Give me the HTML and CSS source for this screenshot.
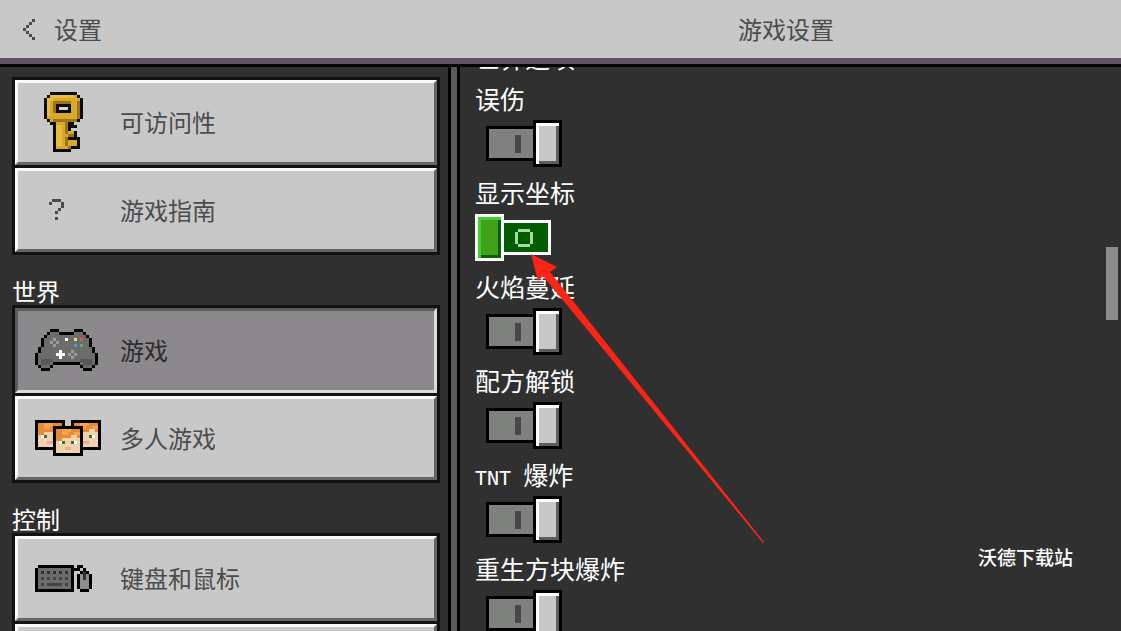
FILE: index.html
```html
<!DOCTYPE html>
<html lang="zh-CN">
<head>
<meta charset="utf-8">
<meta name="viewport" content="width=device-width, initial-scale=1">
<title>设置</title>
<link rel="stylesheet" href="styles.css">
</head>
<body>
<header class="topbar">
  <button class="back" type="button">
    <svg class="chevron" viewBox="0 0 4 7" aria-hidden="true"><path d="M3 0h1v1h-1zM2 1h1v1h-1zM1 2h1v1h-1zM0 3h1v1h-1zM1 4h1v1h-1zM2 5h1v1h-1zM3 6h1v1h-1z"/></svg>
    <span>设置</span>
  </button>
  <h1 class="title">游戏设置</h1>
</header>
<main class="panes">
  <nav class="sidebar">
    <div class="group">
      <button class="item" type="button">
        <span class="icon"><svg class="key" viewBox="0 0 13 20" aria-hidden="true">
          <path fill="#0c0a05" d="M2 0h9v1h1v1h1v7h-1v1h-2v1h1v1h-2v1h2v2h1v4h-3v1h-6v-9h-1v-1h-1v-1h-1v-7h1v-1h1z"/>
          <path fill="#d8a92b" d="M2 1h9v1h1v7h-1v1h-9v-1h-1v-7h1zM4 10h4v9h-4zM8 13h2v1h-2zM8 16h3v2h-3z"/>
          <path fill="#ecbc40" d="M2 1h8v1h-7v1h-1v5h-1v-6h1zM4 11h2v7h-2z"/>
          <path fill="#9c751b" d="M11 3h1v6h-1v1h-8v-1h8zM3 3h6v1h-5v3h-1zM7 10h1v4h-1zM7 15h1v3h-1zM8 14h2v1h-2zM8 18h1v1h-1z"/>
          <path fill="#0c0a05" d="M4 4h5v3h-5z"/>
          <path fill="#d5d5d5" d="M5 5h3v1h-3z"/>
        </svg></span>
        <span>可访问性</span>
      </button>
      <button class="item" type="button">
        <span class="icon"><svg class="question" viewBox="0 0 5 7" aria-hidden="true"><path d="M1 0h3v1h-3zM0 1h1v1h-1zM4 1h1v2h-1zM3 3h1v1h-1zM2 4h1v1h-1zM2 6h1v1h-1z"/></svg></span>
        <span>游戏指南</span>
      </button>
    </div>
    <h2 class="heading">世界</h2>
    <div class="group">
      <button class="item selected" type="button" aria-current="page">
        <span class="icon"><svg class="pad" viewBox="0 0 21 14" aria-hidden="true">
          <path fill="#000" d="M5 0h3v1h5v-1h3v1h1v1h1v1h1v3h1v2h1v4h-1v1h-1v1h-3v-1h-1v-1h-9v1h-1v1h-3v-1h-1v-1h-1v-4h1v-2h1v-3h1v-1h1v-1h1z"/>
          <path fill="#6b6d6a" d="M5 1h3v1h5v-1h3v1h1v1h1v3h1v2h1v4h-1v1h-3v-1h-1v-1h-9v1h-1v1h-3v-1h-1v-4h1v-2h1v-3h1v-1h1z"/>
          <path fill="#565856" d="M2 10h4v1h-1v1h-3zM15 10h4v2h-3v-1h-1z"/>
          <path fill="#9b9c9b" d="M6 3h1v1h-1zM5 4h1v1h-1zM7 4h1v1h-1zM6 5h1v1h-1zM12 7h1v1h-1zM11 8h1v1h-1zM13 8h1v1h-1zM12 9h1v1h-1z"/>
          <path fill="#fff" d="M10 3h1v1h-1zM8 7h1v1h1v1h-1v1h-1v-1h-1v-1h1z"/>
          <path fill="#f3dc5d" d="M13 3h1v1h-1z"/><path fill="#e8506a" d="M15 3h1v1h-1z"/>
          <path fill="#3ea4dc" d="M13 5h1v1h-1z"/><path fill="#62ad62" d="M15 5h1v1h-1z"/>
        </svg></span>
        <span>游戏</span>
      </button>
      <button class="item" type="button">
        <span class="icon"><svg class="faces" viewBox="0 0 22 12" aria-hidden="true">
          <defs><g id="face">
            <path fill="#000" d="M0 0h10v10h-10z"/>
            <path fill="#f0d3ad" d="M1 1h8v8h-8z"/>
            <path fill="#e98a32" d="M1 1h8v3h-1v-1h-2v1h-3v1h-2z"/>
            <path fill="#f5a552" d="M3 1h3v1h-1v1h-2zM7 2h2v1h-2z"/>
            <path fill="#fff" d="M2 5h1v1h-1zM7 5h1v1h-1z"/>
            <path fill="#35752b" d="M3 5h1v1h-1zM6 5h1v1h-1z"/>
            <path fill="#eaa9a0" d="M4 7h2v1h-2z"/>
          </g></defs>
          <use href="#face"/><use href="#face" x="12"/><use href="#face" x="6" y="2"/>
        </svg></span>
        <span>多人游戏</span>
      </button>
    </div>
    <h2 class="heading">控制</h2>
    <div class="group">
      <button class="item" type="button">
        <span class="icon"><svg class="keyboard" viewBox="0 0 19 9" aria-hidden="true">
          <path fill="#000" d="M1 0h12v1h1v-1h2v1h1v1h1v1h1v5h-1v1h-3v-1h-1v-5h1v-1h1v-1h-1v1h-2v7h-13v-8h1z"/>
          <path fill="#6d6b6e" d="M1 1h11v7h-11z"/>
          <path fill="#8d8d8b" d="M15 3h3v5h-3z"/>
          <path fill="#30302f" d="M16 2h1v3h-1zM2 2h1v1h-1zM4 2h1v1h-1zM6 2h1v1h-1zM8 2h1v1h-1zM10 2h1v1h-1z"/>
          <path fill="#444345" d="M2 4h1v1h-1zM4 4h1v1h-1zM6 4h1v1h-1zM8 4h1v1h-1zM10 4h1v1h-1zM2 6h1v1h-1zM4 6h5v1h-5zM10 6h1v1h-1z"/>
        </svg></span>
        <span>键盘和鼠标</span>
      </button>
      <button class="item" type="button" aria-label="控制器"></button>
    </div>
  </nav>
  <section class="content">
    <div class="options">
      <h2 class="section-title">世界选项</h2>
      <label class="option"><span>误伤</span>
        <span class="switch"><input type="checkbox"><span class="track"><span class="bar"></span></span><span class="knob"></span></span></label>
      <label class="option"><span>显示坐标</span>
        <span class="switch on"><input type="checkbox" checked><span class="knob"></span><span class="track"><svg class="ring" viewBox="0 0 6 6" aria-hidden="true"><path fill-rule="evenodd" d="M1 0h4v1h1v4h-1v1h-4v-1h-1v-4h1zM1 1v4h4v-4z"/></svg></span></span></label>
      <label class="option"><span>火焰蔓延</span>
        <span class="switch"><input type="checkbox"><span class="track"><span class="bar"></span></span><span class="knob"></span></span></label>
      <label class="option"><span>配方解锁</span>
        <span class="switch"><input type="checkbox"><span class="track"><span class="bar"></span></span><span class="knob"></span></span></label>
      <label class="option"><span><span class="latin">TNT </span>爆炸</span>
        <span class="switch"><input type="checkbox"><span class="track"><span class="bar"></span></span><span class="knob"></span></span></label>
      <label class="option"><span>重生方块爆炸</span>
        <span class="switch"><input type="checkbox"><span class="track"><span class="bar"></span></span><span class="knob"></span></span></label>
    </div>
    <div class="rail"><div class="thumb"></div></div>
  </section>
</main>
<svg class="arrow" viewBox="0 0 233 289" aria-hidden="true"><path fill="#fb2416" d="M0 0L26 13L19 18L233 288L232 289L12 22L7 27z"/></svg>
<p class="watermark">沃德下载站</p>
</body>
</html>
```
FILE: styles.css
```css
* { box-sizing: border-box; }

body {
  margin: 0;
  height: 100vh;
  display: flex;
  flex-direction: column;
  overflow: hidden;
  position: relative;
  background: #303030;
  color: #fff;
  font: 24px/32px "Noto Sans CJK SC", sans-serif;
}

button { font: inherit; color: inherit; border: 0; text-align: left; cursor: pointer; }
h1, h2, p { margin: 0; font-size: inherit; font-weight: 400; }
svg { display: block; shape-rendering: crispEdges; }

.topbar {
  flex: none;
  display: grid;
  grid-template-columns: 451fr 670fr;
  align-items: center;
  height: 67px;
  background: #c8c8c8;
  border-bottom: 3px solid #060306;
  box-shadow: inset 0 -6px #5d565f;
  padding-bottom: 6px;
  color: #4c4c4c;
}
.back {
  justify-self: start;
  display: flex;
  align-items: center;
  gap: 19px;
  padding: 0 0 0 23px;
  background: none;
}
.chevron { width: 12px; height: 21px; fill: #4c4c4c; }
.title { text-align: center; }

.panes {
  flex: 1;
  min-height: 0;
  display: grid;
  grid-template-columns: 451fr 670fr;
}
.sidebar {
  min-width: 0;
  overflow: hidden;
  padding: 10px 8px 0 12px;
  border-right: 3px solid #000;
}
.group {
  display: flex;
  flex-direction: column;
  gap: 3px;
  padding: 3px;
  background: #101311;
}
.item {
  display: flex;
  align-items: center;
  gap: 8px;
  width: 100%;
  height: 85px;
  padding: 0 17px 1px;
  background: #c8c8c8;
  border: 3px solid;
  border-color: #fafafa #656765 #656765 #fafafa;
  color: #4c4c4c;
}
.item + .item { height: 84px; }
.item.selected {
  background: #8c898c;
  border-color: #5c5b5d #dcdcdc #dcdcdc #5c5b5d;
  color: #2c2c2c;
}
.icon { width: 77px; flex: none; }
.key { width: 39px; height: 60px; margin-left: 9px; }
.question { width: 15px; height: 21px; margin-left: 14px; fill: #4c4c4c; }
.pad { width: 63px; height: 42px; }
.faces { width: 66px; height: 36px; }
.keyboard { width: 57px; height: 27px; }
.heading { height: 50px; padding-top: 20px; line-height: 32px; }

.content {
  min-width: 0;
  min-height: 0;
  display: flex;
  justify-content: space-between;
  overflow: hidden;
  border-left: 6px solid #5a5a5a;
  box-shadow: inset 3px 0 #000;
}
.options {
  display: flex;
  flex-direction: column;
  padding-left: 18px;
  font-size: 25px;
  line-height: 30px;
}
.section-title { margin-top: -25px; margin-bottom: 11px; }
.option {
  flex: none;
  display: flex;
  flex-direction: column;
  gap: 7px;
  height: 94px;
}
.latin { font: 20px/1 "DejaVu Sans Mono", monospace; white-space: pre; }
.switch {
  position: relative;
  display: flex;
  align-items: center;
  justify-content: flex-end;
  width: 87px;
  height: 47px;
}
.switch.on { justify-content: flex-start; }
.switch input {
  appearance: none;
  position: absolute;
  inset: 0;
  margin: 0;
  cursor: pointer;
}
.track {
  display: flex;
  align-items: center;
  justify-content: flex-end;
  width: 47px;
  height: 35px;
  padding-right: 12px;
  background: #7f817e;
  border: 3px solid #000;
  border-right: 0;
}
.bar { width: 6px; height: 18px; background: #484848; }
.knob {
  width: 29px;
  height: 47px;
  border: 3px solid #000;
  background: #c8c8c8;
  box-shadow: inset 3px 3px #fff, inset -3px -3px #5f5c60;
}
.on .track {
  justify-content: flex-start;
  padding: 0 0 0 11px;
  background: #025c02;
  border: 3px solid #fff;
  border-left: 0;
}
.on .knob {
  border-color: #fff;
  background: #43a01b;
  box-shadow: inset 3px 3px #43cf2e, inset -3px -3px #06610a;
}
.ring { width: 18px; height: 18px; fill: #a9d8a4; }

.rail { padding: 180px 3px 0 0; }
.thumb { width: 12px; height: 73px; background: #8b8d8b; }

/* Pointer and watermark lie over the settings screen */
.arrow {
  position: absolute;
  left: 531px;
  top: 254px;
  width: 233px;
  height: 289px;
  shape-rendering: auto;
  pointer-events: none;
}
.watermark {
  position: absolute;
  right: 48px;
  bottom: 59px;
  font-size: 19px;
  font-weight: 500;
  line-height: 30px;
}
```
